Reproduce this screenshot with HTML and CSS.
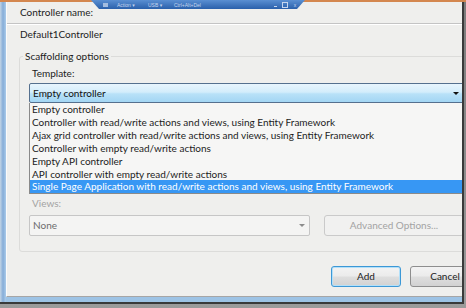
FILE: index.html
```html
<!DOCTYPE html>
<html>
<head>
  <title>Add Controller</title>
  <link rel="stylesheet" href="styles.css">
</head>
<body>
<div class="screen">
  <div class="rdp-bar">
    <span class="pin"></span>
    <span class="rdp-item action">Action ▾</span>
    <span class="rdp-item usb">USB ▾</span>
    <span class="rdp-item cad">Ctrl+Alt+Del</span>
    <span class="rdp-btn min"></span>
    <span class="rdp-btn restore"></span>
    <span class="rdp-btn close">x</span>
  </div>
  <div class="strip"></div>
  <div class="window">
    <div class="frame">
      <div class="dialog">
        <div class="inner">
          <div class="name-label">Controller name:</div>
          <div class="name-value">Default1Controller</div>

          <fieldset class="scaffold">
            <legend>Scaffolding options</legend>
            <div class="field-label">Template:</div>
            <div class="combo open">
              <span>Empty controller</span>
              <span class="arrow"></span>
            </div>
            <ul class="combo-list">
              <li>Empty controller</li>
              <li>Controller with read/write actions and views, using Entity Framework</li>
              <li>Ajax grid controller with read/write actions and views, using Entity Framework</li>
              <li>Controller with empty read/write actions</li>
              <li>Empty API controller</li>
              <li>API controller with empty read/write actions</li>
              <li class="selected">Single Page Application with read/write actions and views, using Entity Framework</li>
            </ul>
            <div class="field-label disabled">Views:</div>
            <div class="views-row">
              <div class="combo off">
                <span>None</span>
                <span class="arrow"></span>
              </div>
              <button class="btn advanced" disabled>Advanced Options...</button>
            </div>
          </fieldset>

          <div class="actions">
            <button class="btn add">Add</button>
            <button class="btn">Cancel</button>
          </div>
        </div>
      </div>
    </div>
  </div>
</div>
</body>
</html>
```

FILE: styles.css
```css
* {
  box-sizing: border-box;
}

body {
  margin: 0;
  background: #8e8e8e;
  font-family: Lato, "Open Sans", sans-serif;
  font-size: 10px;
  color: #1c1c1c;
}

.screen {
  position: relative;
  width: 466px;
  height: 308px;
  overflow: hidden;
  background: linear-gradient(#7c7c7c, #9b9b9b);
}

.strip {
  height: 2px;
  background: #d4874f;
}

/* remote desktop tab */
.rdp-bar {
  position: absolute;
  left: 91px;
  top: 0;
  width: 214px;
  height: 9px;
  display: flex;
  align-items: center;
  clip-path: polygon(0 0, 100% 0, calc(100% - 8px) 100%, 8px 100%);
  background: linear-gradient(#5a8fd2, #2a60ab);
  font-family: "Liberation Sans", "DejaVu Sans", sans-serif;
  font-size: 5px;
  color: #c6d6ee;
  z-index: 2;
}

.pin {
  width: 5px;
  height: 4px;
  margin-left: 12px;
  margin-right: 9px;
  background: #a3bde0;
}

.rdp-item {
  white-space: nowrap;
}
.action { width: 31px; }
.usb { width: 26px; }
.cad { width: 96px; }

.rdp-btn {
  width: 10px;
  display: flex;
  justify-content: center;
}
.min::before {
  content: "";
  width: 3px;
  height: 1px;
  margin-top: 3px;
  background: #c6d6ee;
}
.restore::before {
  content: "";
  width: 4px;
  height: 4px;
  border: 1px solid #c6d6ee;
}

/* window frame */
.window {
  width: 464px;
  height: 302px;
  border-right: 2px solid #3a3a3a;
  border-bottom: 2px solid #3a3a3a;
}

.frame {
  height: 100%;
  padding: 0 0 5px 6px;
  background: linear-gradient(90deg, #c3d5e6, #86add8 3px, #aacbea 6px) left top / 6px 100% no-repeat, #9dc3e5;
}

.dialog {
  height: 100%;
  background: #efefed;
  border-left: 1px solid #fbfbfb;
  border-bottom: 1px solid #a6a6a6;
  overflow: hidden;
}

.inner {
  width: 474px;
}

.name-label {
  padding: 4px 0 4px 13px;
  line-height: 13px;
  border-bottom: 1px solid #c4c4c4;
  box-shadow: 0 1px 0 #fff;
}

.name-value {
  padding: 4px 0 0 13px;
  line-height: 13px;
}

.scaffold {
  margin: 9px 0 0 12px;
  width: 453px;
  padding: 0 0 15px 9px;
  border: 1px solid #dcdcda;
  border-radius: 3px;
}

.scaffold legend {
  margin-left: -6px;
  padding: 0 2px;
  line-height: 13px;
}

.field-label {
  margin-top: 4px;
  padding-left: 3px;
  line-height: 13px;
}
.field-label.disabled {
  margin-top: 3px;
  color: #a3a3a3;
}

.combo {
  display: flex;
  align-items: center;
  padding-left: 3px;
  border-radius: 2px;
  white-space: nowrap;
}
.combo .arrow {
  margin-left: auto;
  margin-right: 4px;
  border-left: 3px solid transparent;
  border-right: 3px solid transparent;
  border-top: 3px solid #111;
}

.combo.open {
  margin-top: 3px;
  width: 435px;
  height: 20px;
  border: 1px solid #55708e;
  background: linear-gradient(#e8f5fd, #d3edfb 45%, #b8e1f8 55%, #a3d6f4);
  color: #111;
}

.combo-list {
  list-style: none;
  margin: 0;
  padding: 0;
  width: 435px;
  border: 1px solid #8a8a8a;
  border-top: none;
  background: #f6f6f5;
}

.combo-list li {
  padding-left: 2px;
  line-height: 12.9px;
  white-space: nowrap;
}
.combo-list li.selected {
  background: #3797f4;
  color: #fff;
}

.views-row {
  display: flex;
  gap: 14px;
  margin-top: 4.5px;
}

.combo.off {
  width: 281px;
  height: 21px;
  border: 1px solid #c6c6c6;
  background: #f4f4f3;
  color: #6c6c6c;
}
.combo.off .arrow {
  border-top-color: #8c8c8c;
}

.btn {
  height: 21px;
  padding: 0;
  font: inherit;
  color: #1c1c1c;
  border: 1px solid #8e8e8e;
  border-radius: 3px;
  background: linear-gradient(#f3f3f3, #ebebeb 48%, #dedede 52%, #d2d2d2);
}

.btn.advanced {
  width: 140px;
  border-color: #cacaca;
  background: #f1f1f0;
  color: #a3a3a3;
}

.actions {
  display: flex;
  justify-content: flex-end;
  gap: 9px;
  margin-top: 14px;
  padding-right: 1px;
}
.actions .btn {
  width: 70px;
}
.btn.add {
  border-color: #3c98d6;
  box-shadow: inset 0 0 0 1px #b3e0f9;
}
```
